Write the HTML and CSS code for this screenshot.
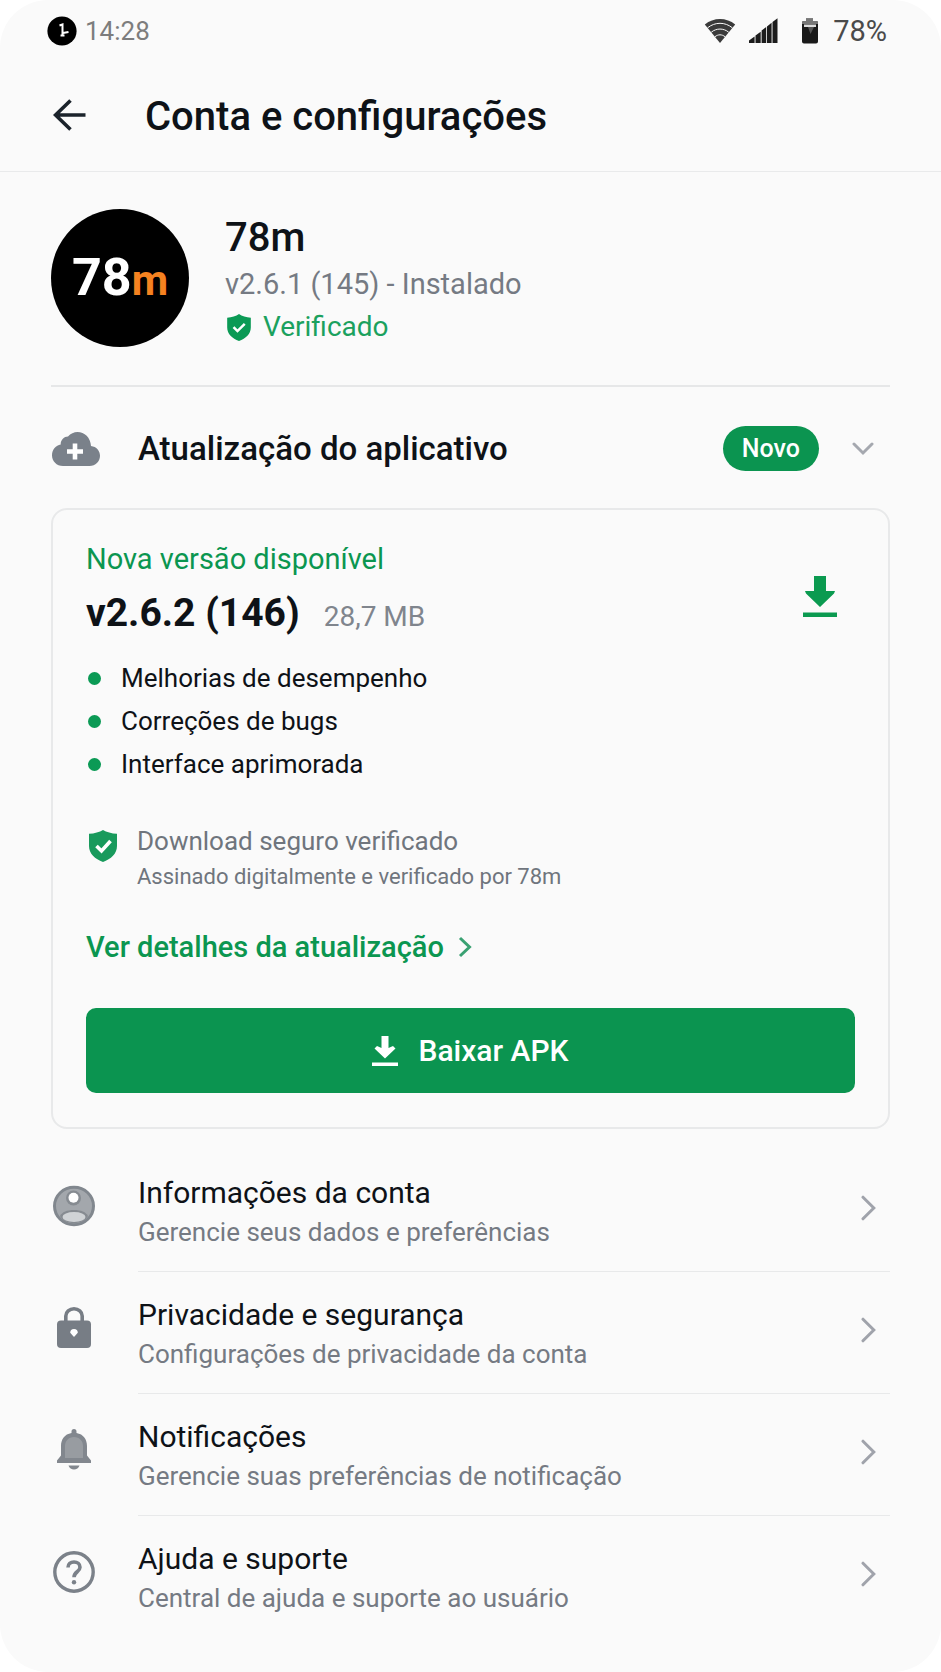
FILE: index.html
```html
<!DOCTYPE html>
<html lang="pt-BR">
<head>
<meta charset="utf-8">
<meta name="viewport" content="width=device-width, initial-scale=1">
<title>Conta e configurações</title>
<link rel="stylesheet" href="styles.css">
</head>
<body>
<div class="screen">
  <div class="status">
    <div class="status-group">
      <svg class="status-clock" viewBox="0 0 30 30" aria-hidden="true"><circle cx="15" cy="15" r="14.6" fill="#000"/><path d="M12.500 9.500L15.500 8.500V19.500M13.500 19.500h4M16 17l5.500-1" fill="none" stroke="#fff" stroke-width="2"/></svg>
      <span class="status-time">14:28</span>
    </div>
    <div class="status-group status-right">
      <svg class="status-wifi" viewBox="0 0 32 26" aria-hidden="true"><path d="M16 25L.8 6.600C9.500-.8 22.500-.8 31.200 6.600Z" fill="#3a3a3a"/><path d="M3.600 9.800C11 3.800 21 3.800 28.400 9.800M7.300 14.200C12.500 10 19.500 10 24.700 14.200M11 18.700c3.100-2.500 6.900-2.500 10 0" fill="none" stroke="#fafafa" stroke-width="1"/></svg>
      <svg class="status-signal" viewBox="0 0 30 26" aria-hidden="true"><path d="M0 25v-2.500L5.600 18.500v6.500ZM6.500 25v-7.400l5.200-3.800V25ZM12.600 25V12.600l4.600-3.600V25ZM18 25V8.400l4.600-3.600V25ZM23.500 25V4l5-3.800V25Z" fill="#1c1c1c"/></svg>
      <svg class="status-battery" viewBox="0 0 18 28" aria-hidden="true"><path d="M5 1.500h7v2.500h3.500a1.500 1.500 0 0 1 1.500 1.500v19a2 2 0 0 1-2 2H3a2 2 0 0 1-2-2v-19A1.500 1.500 0 0 1 2.500 4H5Z" fill="#1a1a1a"/><path d="M5 1.500h7v2.500h3.500a1.500 1.500 0 0 1 1.500 1.500V7H1V5.500A1.500 1.500 0 0 1 2.500 4H5Z" fill="#777"/><path d="M3 7.500h12v2.500H3Z" fill="#ddd"/><path d="M7 10h6L9.500 17Z" fill="#555"/></svg>
      <span class="status-level">78%</span>
    </div>
  </div>

  <header class="topbar">
    <button class="back" type="button" aria-label="Voltar">
      <svg viewBox="0 0 34 32" aria-hidden="true"><path d="M32.500 16H2.500M17.500 1.500L2.500 16l15 14.500" fill="none" stroke="#1b232b" stroke-width="3.600"/></svg>
    </button>
    <h1 class="title">Conta e configurações</h1>
  </header>

  <main class="content">
    <section class="profile">
      <div class="avatar"><span class="avatar-number">78</span><span class="avatar-letter">m</span></div>
      <div class="profile-text">
        <h2 class="profile-name">78m</h2>
        <p class="profile-version">v2.6.1 (145) - Instalado</p>
        <p class="verified">
          <svg class="verified-icon" viewBox="0 0 28 32" aria-hidden="true"><path d="M14 0C10.500 2.700 5.500 4 0 4.300V16c0 7.800 6 13 14 16 8-3 14-8.200 14-16V4.300C22.500 4 17.500 2.700 14 0Z" fill="#0b9a55"/><path d="M7.500 15.500l4.700 4.700 8.600-8.400" fill="none" stroke="#fff" stroke-width="3"/></svg>
          Verificado
        </p>
      </div>
    </section>

    <section>
      <div class="update-head">
        <svg class="cloud" viewBox="0 0 48 34" aria-hidden="true"><path d="M11 34C4.500 34 0 29 0 23.200 0 17.500 4 13.300 8.700 12.400 8.500 8 12.500 4.500 16 4.600 18.500 1.500 22 0 25.500 0 32.500 0 38.500 5.500 39 14 44.500 14.600 48 18.800 48 23.700 48 29.500 43.500 34 37.500 34Z" fill="#7a818a"/><path d="M23 11.500v16M15 19.500h16" stroke="#fff" stroke-width="4.600"/></svg>
        <h2 class="update-title">Atualização do aplicativo</h2>
        <span class="badge">Novo</span>
        <button class="collapse" type="button" aria-label="Recolher atualização">
          <svg viewBox="0 0 22 14" aria-hidden="true"><path d="M2 2l9 9 9-9" fill="none" stroke="#a5a8af" stroke-width="3" stroke-linecap="round"/></svg>
        </button>
      </div>

      <article class="card">
        <div class="card-top">
          <div>
            <p class="new-version">Nova versão disponível</p>
            <div class="version-row"><h3 class="version">v2.6.2 (146)</h3><span class="size">28,7 MB</span></div>
          </div>
          <button class="download-small" type="button" aria-label="Baixar">
            <svg viewBox="0 0 34 42" aria-hidden="true"><path d="M11 0h12v15h9l-1 2.500L17 31 3 17.500 2 15h9ZM0 36.500h34V41H0Z" fill="#0b9a50"/></svg>
          </button>
        </div>
        <ul class="changes">
          <li class="change">Melhorias de desempenho</li>
          <li class="change">Correções de bugs</li>
          <li class="change">Interface aprimorada</li>
        </ul>
        <div class="secure">
          <svg class="secure-icon" viewBox="0 0 28 32" aria-hidden="true"><path d="M14 0C10.500 2.200 5.500 3.500 0 3.800V16c0 7.800 6 13 14 16 8-3 14-8.200 14-16V3.800C22.500 3.500 17.500 2.200 14 0Z" fill="#189a5c"/><path d="M7.500 16l5 5 9-10" fill="none" stroke="#fff" stroke-width="3.600"/></svg>
          <div>
            <p class="secure-title">Download seguro verificado</p>
            <p class="secure-text">Assinado digitalmente e verificado por 78m</p>
          </div>
        </div>
        <a class="details" href="#">Ver detalhes da atualização
          <svg class="details-arrow" viewBox="0 0 14 22" aria-hidden="true"><path d="M2 2l9.500 9L2 20" fill="none" stroke="#3aa172" stroke-width="3"/></svg>
        </a>
        <button class="download" type="button">
          <svg class="download-icon" viewBox="0 0 26 30" aria-hidden="true"><path d="M9.500 0h7v12l4.500-2 2.500 2.500L13 22.500 2.500 12.500 5 10l4.500 2ZM0 26.500h26V30H0Z" fill="#fff"/></svg>
          Baixar APK
        </button>
      </article>
    </section>

    <nav class="menu">
      <a class="item" href="#">
        <svg class="item-icon" viewBox="0 0 42 42" aria-hidden="true"><ellipse cx="21" cy="21" rx="19.500" ry="18.800" fill="#a3a7ac" stroke="#81878e" stroke-width="3"/><circle cx="20.500" cy="13" r="7.500" fill="#868b91"/><circle cx="20.500" cy="12.800" r="5" fill="#fff"/><path d="M7 31c2-4 7-6 14-6s12 2 14 6c-3 5-8 7-14 7S10 36 7 31Z" fill="#868b91"/><ellipse cx="21" cy="32" rx="11.500" ry="5" fill="#d0d3d6"/></svg>
        <span class="item-body">
          <span class="item-text"><span class="item-title">Informações da conta</span><span class="item-sub">Gerencie seus dados e preferências</span></span>
          <svg class="chevron" viewBox="0 0 15 26" aria-hidden="true"><path d="M2 2.200L12.800 13 2 23.800" fill="none" stroke="#a0a3ab" stroke-width="3" stroke-linecap="round"/></svg>
        </span>
      </a>
      <a class="item" href="#">
        <svg class="item-icon" viewBox="0 0 42 42" aria-hidden="true"><path d="M12.800 15V9a8.200 7.200 0 0 1 16.400 0V15" fill="none" stroke="#777d85" stroke-width="3.600"/><rect x="4" y="13.500" width="34" height="27.500" rx="4" fill="#777d85"/><path d="M21 22a3.800 3.800 0 0 1 3.800 3.800L21 30l-3.800-4.200A3.800 3.800 0 0 1 21 22Z" fill="#fff"/></svg>
        <span class="item-body">
          <span class="item-text"><span class="item-title">Privacidade e segurança</span><span class="item-sub">Configurações de privacidade da conta</span></span>
          <svg class="chevron" viewBox="0 0 15 26" aria-hidden="true"><path d="M2 2.200L12.800 13 2 23.800" fill="none" stroke="#a0a3ab" stroke-width="3" stroke-linecap="round"/></svg>
        </span>
      </a>
      <a class="item" href="#">
        <svg class="item-icon" viewBox="0 0 42 42" aria-hidden="true"><path d="M18.500 4V2.500a2.500 2.500 0 0 1 5 0V4C30.500 5.200 34 10.500 34 17v9.500l4 5V34H4v-2.500l4-5V17C8 10.500 11.500 5.200 18.500 4Z" fill="#82878e"/><path d="M12 29V17c0-5 3.500-9 9-9s9 4 9 9v12Z" fill="#989ca1"/><path d="M15.500 36.500h11c-.8 2.600-3 4-5.500 4s-4.700-1.400-5.500-4Z" fill="#82878e"/></svg>
        <span class="item-body">
          <span class="item-text"><span class="item-title">Notificações</span><span class="item-sub">Gerencie suas preferências de notificação</span></span>
          <svg class="chevron" viewBox="0 0 15 26" aria-hidden="true"><path d="M2 2.200L12.800 13 2 23.800" fill="none" stroke="#a0a3ab" stroke-width="3" stroke-linecap="round"/></svg>
        </span>
      </a>
      <a class="item" href="#">
        <svg class="item-icon" viewBox="0 0 42 42" aria-hidden="true"><circle cx="21" cy="21" r="19.200" fill="none" stroke="#7b8189" stroke-width="3.400"/><path d="M15 16.500c0-3.500 2.600-5.500 6-5.500s6 2 6 5.200c0 4.600-6 4.600-6 10" fill="none" stroke="#7b8189" stroke-width="3.600"/><circle cx="21" cy="31.200" r="2.200" fill="#7b8189"/></svg>
        <span class="item-body">
          <span class="item-text"><span class="item-title">Ajuda e suporte</span><span class="item-sub">Central de ajuda e suporte ao usuário</span></span>
          <svg class="chevron" viewBox="0 0 15 26" aria-hidden="true"><path d="M2 2.200L12.800 13 2 23.800" fill="none" stroke="#a0a3ab" stroke-width="3" stroke-linecap="round"/></svg>
        </span>
      </a>
    </nav>
  </main>
</div>
</body>
</html>
```
FILE: styles.css
```css
* { box-sizing: border-box; margin: 0; padding: 0; }

body {
  background: #fff;
  color: #0e1217;
  font-family: Roboto, "Liberation Sans", sans-serif;
  font-size: 28px;
}

button { border: 0; background: none; font: inherit; color: inherit; cursor: pointer; }
a { color: inherit; text-decoration: none; }
svg { display: block; flex: none; }

.screen { min-height: 100vh; background: #fafafa; border-radius: 48px; }

/* Status bar */
.status { display: flex; justify-content: space-between; align-items: center; height: 62px; padding: 0 54px 0 47px; }
.status-group { display: flex; align-items: center; gap: 8px; }
.status-clock { width: 30px; height: 30px; }
.status-wifi { width: 32px; height: 26px; }
.status-signal { width: 30px; height: 26px; margin-left: 5px; }
.status-battery { width: 18px; height: 28px; margin-left: 14px; }
.status-time { color: #7d7d7d; font-size: 26px; }
.status-level { color: #4a4a4a; margin-left: 6px; font-size: 29px; }

/* Top bar */
.topbar { display: flex; align-items: center; gap: 58px; height: 110px; padding: 0 53px; border-bottom: 1px solid #e9eaeb; }
.back { padding-bottom: 3px; }
.back svg { width: 34px; height: 32px; }
.title { font-size: 40px; font-weight: 500; line-height: 46px; }

.content { padding: 0 51px; }

/* Profile */
.profile { display: flex; align-items: center; gap: 36px; padding: 37px 0 38px; border-bottom: 2px solid #e6e7e8; }
.avatar { display: flex; align-items: baseline; justify-content: center; flex: none; width: 138px; height: 138px; border-radius: 50%; background: #000; font-weight: 700; line-height: 138px; }
.avatar-number { color: #fff; font-size: 52px; }
.avatar-letter { color: #f58220; font-size: 42px; }
.profile-text { padding-top: 6px; }
.profile-name { font-size: 40px; font-weight: 500; line-height: 46px; }
.profile-version { color: #757a83; font-size: 29px; line-height: 46px; }
.verified { display: flex; align-items: center; gap: 12px; color: #1ba15e; line-height: 40px; }
.verified-icon { width: 24px; height: 27px; margin-left: 2px; }

/* Update section */
.update-head { display: flex; align-items: center; padding: 39px 16px 37px 1px; }
.cloud { width: 48px; height: 34px; }
.update-title { flex: 1; margin-left: 38px; font-size: 33px; font-weight: 500; line-height: 45px; }
.badge { padding: 0 19px; border-radius: 23px; background: #0b9450; color: #fff; font-size: 25px; font-weight: 500; line-height: 45px; }
.collapse { margin-left: 33px; }
.collapse svg { width: 22px; height: 14px; }

.card { padding: 32px 33px 34px; border: 2px solid #e8e9ea; border-radius: 16px; }
.card-top { display: flex; justify-content: space-between; align-items: center; }
.new-version { color: #0b9650; font-size: 29px; line-height: 34px; }
.version-row { display: flex; align-items: baseline; gap: 24px; margin-top: 14px; line-height: 46px; }
.version { font-size: 39px; font-weight: 700; }
.size { color: #80858d; }
.download-small { padding: 12px 18px 0; }
.download-small svg { width: 34px; height: 42px; }

.changes { display: grid; gap: 15px; margin-top: 24px; list-style: none; }
.change { display: flex; align-items: center; gap: 20px; padding-left: 2px; font-size: 26px; line-height: 28px; }
.change::before { content: ""; width: 13px; height: 13px; border-radius: 50%; background: #0b9a55; }

.secure { display: flex; gap: 20px; margin-top: 45px; padding-left: 3px; color: #6f757d; line-height: 36px; }
.secure-icon { width: 28px; height: 32px; margin-top: 7px; }
.secure-title { font-size: 26px; }
.secure-text { font-size: 22px; }

.details { display: inline-flex; align-items: center; gap: 14px; margin-top: 35px; color: #0b9650; font-size: 29px; line-height: 34px; font-weight: 500; }
.details-arrow { width: 14px; height: 22px; }

.download { display: flex; align-items: center; justify-content: center; gap: 20px; width: 100%; height: 85px; margin-top: 44px; border-radius: 10px; background: #0b9450; color: #fff; font-size: 30px; font-weight: 500; }
.download-icon { width: 26px; height: 30px; }

/* Menu */
.menu { margin-top: 21px; }
.item { display: flex; gap: 43px; padding-left: 2px; }
.item-icon { width: 42px; height: 42px; margin-top: 35px; }
.item-body { display: flex; flex: 1; justify-content: space-between; padding: 23px 14px 20px 0; border-bottom: 1px solid #e8e9ea; }
.item:last-child .item-body { border-bottom: 0; }
.item-title, .item-sub { display: block; }
.item-title { font-size: 30px; line-height: 40px; }
.item-sub { color: #757a83; font-size: 26px; line-height: 38px; }
.chevron { width: 15px; height: 26px; margin-top: 22px; }
```
